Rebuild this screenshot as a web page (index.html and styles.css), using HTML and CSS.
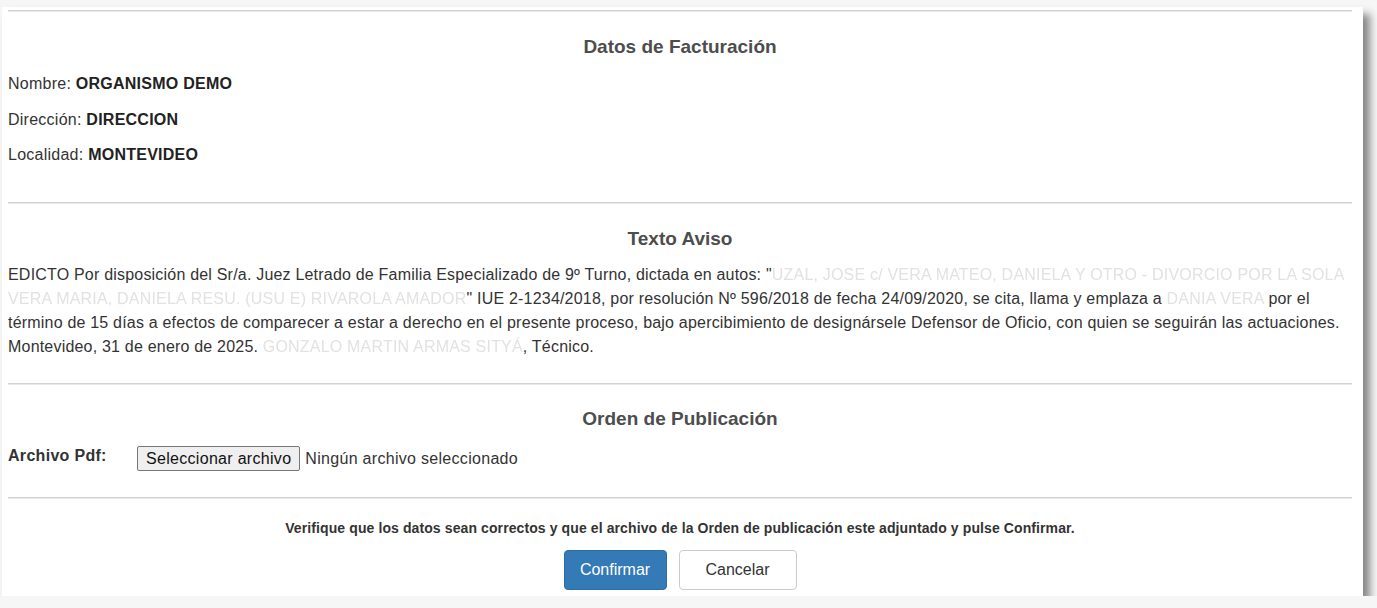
FILE: index.html
```html
<!DOCTYPE html>
<html lang="es">
<head>
    <meta charset="UTF-8">
    <title>Confirmar Aviso</title>
    <link rel="stylesheet" href="styles.css">
</head>
<body>
<div class="card">
    <hr class="rule">
    <div class="block">
        <h3 class="block-title">Datos de Facturación</h3>
        <p class="field">Nombre: <strong>ORGANISMO DEMO</strong></p>
        <p class="field">Dirección: <strong>DIRECCION</strong></p>
        <p class="field">Localidad: <strong>MONTEVIDEO</strong></p>
    </div>
    <hr class="rule rule-fields">
    <div class="block">
        <h3 class="block-title">Texto Aviso</h3>
        <p class="aviso">EDICTO Por disposición del Sr/a. Juez Letrado de Familia Especializado de 9º Turno, dictada en autos: "<span class="redacted">UZAL, JOSE c/ VERA MATEO, DANIELA Y OTRO - DIVORCIO POR LA SOLA VERA MARIA, DANIELA RESU. (USU E) RIVAROLA AMADOR</span>" IUE 2-1234/2018, por resolución Nº 596/2018 de fecha 24/09/2020, se cita, llama y emplaza a <span class="redacted">DANIA VERA</span> por el término de 15 días a efectos de comparecer a estar a derecho en el presente proceso, bajo apercibimiento de designársele Defensor de Oficio, con quien se seguirán las actuaciones. Montevideo, 31 de enero de 2025. <span class="redacted">GONZALO MARTIN ARMAS SITYÁ</span>, Técnico.</p>
    </div>
    <hr class="rule rule-aviso">
    <div class="block">
        <h3 class="block-title title-orden">Orden de Publicación</h3>
        <div class="file-row">
            <label class="file-label" for="pdf">Archivo Pdf:</label>
            <input id="pdf" type="file" accept="application/pdf" class="file-hidden">
            <label class="file-btn" for="pdf">Seleccionar archivo</label>
            <span class="file-name">Ningún archivo seleccionado</span>
        </div>
    </div>
    <hr class="rule rule-file">
    <p class="notice">Verifique que los datos sean correctos y que el archivo de la Orden de publicación este adjuntado y pulse Confirmar.</p>
    <div class="actions">
        <button type="button" class="btn btn-primary">Confirmar</button>
        <button type="button" class="btn btn-default">Cancelar</button>
    </div>
</div>
</body>
</html>
```

FILE: styles.css
```css
body{
    margin: 0;
    background: #f6f6f6;
    font-family: "Liberation Sans", Arial, sans-serif;
    color: #333;
}
.card{
    box-sizing: border-box;
    width: 1361px;
    height: 589px;
    margin: 7px 0 0 2px;
    padding: 3px 11px 0 6px;
    background: #fff;
    box-shadow: 7px 7px 8px rgba(0, 0, 0, 0.45);
}
.rule{
    margin: 0;
    height: 0;
    border: 0;
    border-top: 1px solid #d2d2d2;
    border-bottom: 1px solid #e8e8e8;
}
.rule-fields{
    margin-top: 37px;
}
.rule-aviso{
    margin-top: 24px;
}
.rule-file{
    margin-top: 26px;
}
.block-title{
    margin: 25px 0 0;
    text-align: center;
    font-size: 19px;
    line-height: 20px;
    font-weight: bold;
    color: #4d4d4d;
}
.title-orden{
    margin-top: 24px;
}
.field{
    margin: 15.5px 0 0;
    font-size: 16px;
    line-height: 20px;
    letter-spacing: 0.25px;
}
.block-title + .field{
    margin-top: 17px;
}
.field strong{
    color: #222;
}
.aviso{
    margin: 14px 0 0;
    font-size: 16px;
    line-height: 24px;
    letter-spacing: 0.2px;
}
.redacted{
    color: #e2e2e2;
    filter: blur(0.6px);
}
.file-row{
    display: flex;
    align-items: flex-start;
    margin-top: 17px;
    height: 25px;
}
.file-label{
    width: 129px;
    font-size: 16px;
    line-height: 20px;
    font-weight: bold;
    letter-spacing: 0.3px;
    color: #333;
}
.file-hidden{
    display: none;
}
.file-btn{
    box-sizing: border-box;
    height: 25px;
    padding: 0 8px;
    border: 1px solid #767676;
    border-radius: 2px;
    background: #efefef;
    font-size: 16px;
    line-height: 23px;
    letter-spacing: 0.3px;
    color: #111;
}
.file-name{
    margin-left: 5px;
    font-size: 16px;
    line-height: 25px;
    letter-spacing: 0.3px;
    color: #333;
}
.notice{
    margin: 20px 0 0;
    text-align: center;
    font-size: 14px;
    line-height: 18px;
    font-weight: bold;
    letter-spacing: 0.1px;
    color: #333;
}
.actions{
    display: flex;
    justify-content: center;
    gap: 12px;
    margin-top: 13px;
}
.btn{
    box-sizing: border-box;
    height: 40px;
    border-radius: 4px;
    font-family: "Liberation Sans", Arial, sans-serif;
    font-size: 16px;
    cursor: pointer;
}
.btn-primary{
    width: 103px;
    background: #337ab7;
    border: 1px solid #2e6da4;
    color: #fff;
}
.btn-default{
    width: 118px;
    background: #fff;
    border: 1px solid #ccc;
    color: #333;
}
```
